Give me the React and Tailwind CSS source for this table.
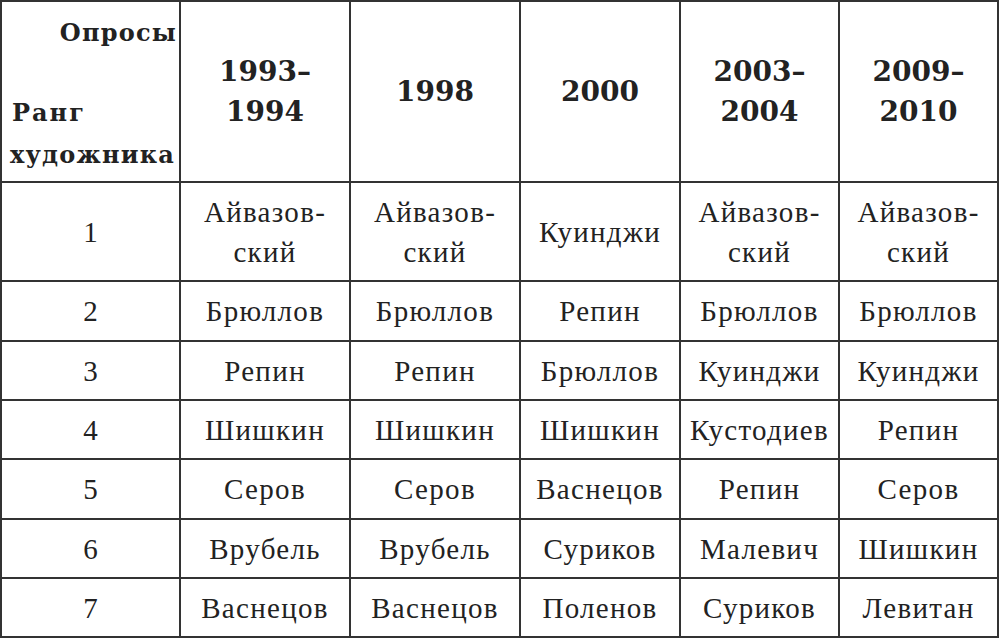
import React from "react";

const years = [
  ["1993–", "1994"],
  ["1998"],
  ["2000"],
  ["2003–", "2004"],
  ["2009–", "2010"],
];

const rows = [
  { rank: "1", h: "h-[99px]", names: [["Айвазов-", "ский"], ["Айвазов-", "ский"], ["Куинджи"], ["Айвазов-", "ский"], ["Айвазов-", "ский"]] },
  { rank: "2", h: "h-[60px]", names: [["Брюллов"], ["Брюллов"], ["Репин"], ["Брюллов"], ["Брюллов"]] },
  { rank: "3", h: "h-[59px]", names: [["Репин"], ["Репин"], ["Брюллов"], ["Куинджи"], ["Куинджи"]] },
  { rank: "4", h: "h-[59px]", names: [["Шишкин"], ["Шишкин"], ["Шишкин"], ["Кустодиев"], ["Репин"]] },
  { rank: "5", h: "h-[60px]", names: [["Серов"], ["Серов"], ["Васнецов"], ["Репин"], ["Серов"]] },
  { rank: "6", h: "h-[59px]", names: [["Врубель"], ["Врубель"], ["Суриков"], ["Малевич"], ["Шишкин"]] },
  { rank: "7", h: "h-[59px]", names: [["Васнецов"], ["Васнецов"], ["Поленов"], ["Суриков"], ["Левитан"]] },
];

const widths = ["w-[179px]", "w-[170px]", "w-[170px]", "w-[160px]", "w-[159px]", "w-[159px]"];

const cell = "border-r-2 border-b-2 border-[#333] flex flex-col items-center justify-center text-center";

export default function App() {
  return (
    <div className="w-[1000px] h-[639px] bg-white text-[#222] font-['Liberation_Serif',serif]">
      <div className="inline-flex flex-col border-l-2 border-t-2 border-[#333]">
        <div className="flex h-[181px]">
          <div className={`${widths[0]} border-r-2 border-b-2 border-[#333] flex flex-col font-['DejaVu_Serif',serif] font-bold text-[24px] tracking-[1.2px]`}>
            <div className="text-right pr-[2px] pt-[15px] leading-[32px]">Опросы</div>
            <div className="pl-[10px] pt-[48px] leading-[32px] tracking-[2px]">Ранг</div>
            <div className="pl-[8px] pt-[10px] leading-[32px] whitespace-nowrap">художника</div>
          </div>
          {years.map((y, i) => (
            <div key={i} className={`${widths[i + 1]} ${cell} font-['DejaVu_Serif',serif] font-bold text-[28px] leading-[40px]`}>
              {y.map((l) => (
                <div key={l}>{l}</div>
              ))}
            </div>
          ))}
        </div>
        {rows.map((r) => (
          <div key={r.rank} className={`flex ${r.h}`}>
            <div className={`${widths[0]} ${cell} text-[29px] leading-[40px]`}>{r.rank}</div>
            {r.names.map((n, i) => (
              <div key={i} className={`${widths[i + 1]} ${cell} text-[29px] leading-[40px] tracking-[1.3px] whitespace-nowrap`}>
                {n.map((l) => (
                  <div key={l}>{l}</div>
                ))}
              </div>
            ))}
          </div>
        ))}
      </div>
    </div>
  );
}
